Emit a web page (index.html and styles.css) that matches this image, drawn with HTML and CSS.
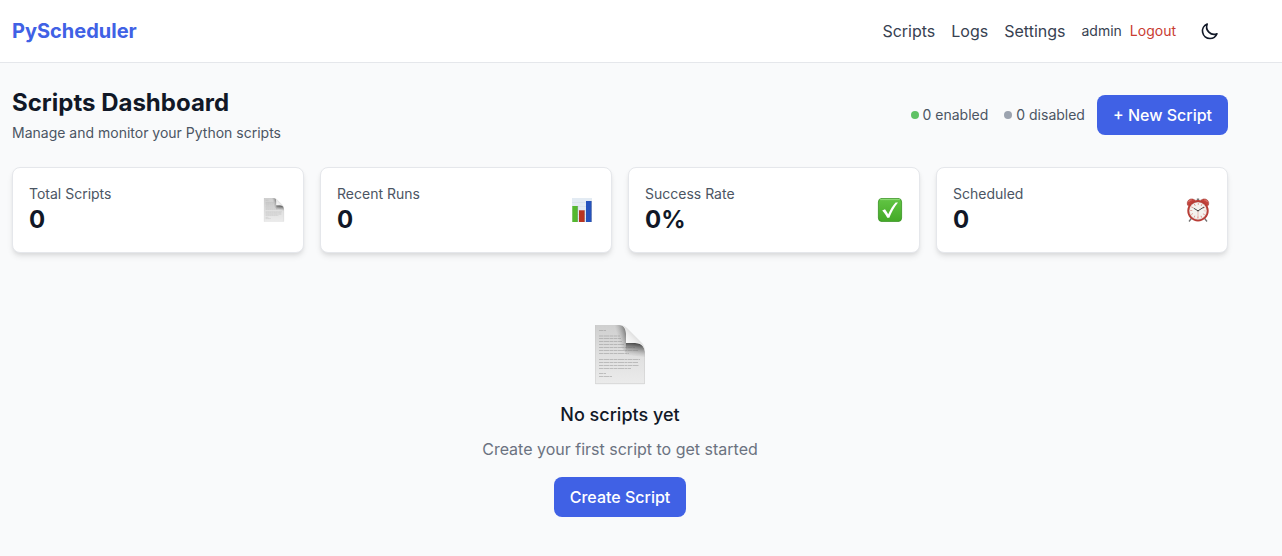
FILE: index.html
```html
<!DOCTYPE html>
<html lang="en">
<head>
<meta charset="utf-8">
<meta name="viewport" content="width=device-width, initial-scale=1">
<title>PyScheduler</title>
<link rel="stylesheet" href="styles.css">
</head>
<body>
<svg class="defs" aria-hidden="true">
  <defs>
    <linearGradient id="paper" x1="0" y1="0" x2="0" y2="1"><stop offset="0" stop-color="#cfcfcf"/><stop offset=".45" stop-color="#dedede"/><stop offset="1" stop-color="#ebebeb"/></linearGradient>
    <linearGradient id="fold-left" gradientUnits="userSpaceOnUse" x1="31" y1="0" x2="20" y2="3"><stop offset="0" stop-color="#444" stop-opacity=".8"/><stop offset="1" stop-color="#999" stop-opacity="0"/></linearGradient>
    <linearGradient id="fold-down" gradientUnits="userSpaceOnUse" x1="40" y1="18" x2="38" y2="32"><stop offset="0" stop-color="#333" stop-opacity=".9"/><stop offset=".4" stop-color="#666" stop-opacity=".6"/><stop offset="1" stop-color="#aaa" stop-opacity="0"/></linearGradient>
    <linearGradient id="flap" gradientUnits="userSpaceOnUse" x1="31" y1="18" x2="40" y2="9"><stop offset="0" stop-color="#fafafa"/><stop offset=".6" stop-color="#ededed"/><stop offset="1" stop-color="#dadada"/></linearGradient>
    <linearGradient id="check-fill" x1="0" y1="0" x2="0" y2="1"><stop offset="0" stop-color="#62c544"/><stop offset="1" stop-color="#43a926"/></linearGradient>
    <symbol id="page" viewBox="0 0 50 60">
      <path fill="url(#paper)" d="M0 0H24C29 0 31 4 31 9V18H40C47 18 50 22 50 29V59H0Z"/>
      <path fill="none" stroke="#939393" stroke-width="1" stroke-dasharray="4 .5 6 .5 3 .5" opacity=".5" d="M4 5.500H11M4 11H25M4 13.500H26M4 16.500H27M4 19.500H29M4 22.500H40M4 25.500H43M4 28.500H34M4 34.500H45M4 37.500H43M4 40.500H44M4 43.500H36M4 48.500H11M4 51.500H17"/>
      <path fill="url(#fold-left)" d="M19 0H24C29 0 31 4 31 9V28L24 20Z"/>
      <path fill="url(#fold-down)" d="M31 18H40C47 18 50 22 50 29V32L31 30Z"/>
      <path fill="url(#flap)" d="M24 0C28 0 30 1 32 3L47 18C49 20 50 23 50 27C49 21 46 18 40 18H31V9C31 4 29 0 24 0Z"/>
      <path fill="none" stroke="#c4c4c4" stroke-width=".5" d="M.3 0V58.700H49.700V29"/>
    </symbol>
  </defs>
</svg>

<header class="topbar">
  <div class="container topbar-inner">
    <a class="brand" href="#">PyScheduler</a>
    <nav class="nav" aria-label="Main">
      <a href="#">Scripts</a>
      <a href="#">Logs</a>
      <a href="#">Settings</a>
      <div class="user">
        <span>admin</span>
        <a class="logout" href="#">Logout</a>
      </div>
      <button class="theme-toggle" type="button" aria-label="Toggle dark mode">
        <svg width="20" height="20" viewBox="0 0 24 24" fill="none" stroke="currentColor" stroke-width="2" stroke-linecap="round" stroke-linejoin="round"><path d="M20.354 15.354A9 9 0 018.646 3.646 9.003 9.003 0 0012 21a9.003 9.003 0 008.354-5.646z"/></svg>
      </button>
    </nav>
  </div>
</header>

<main class="container main">
  <div class="page-head">
    <div>
      <h1>Scripts Dashboard</h1>
      <p class="subtitle">Manage and monitor your Python scripts</p>
    </div>
    <div class="actions">
      <div class="counts">
        <span class="count"><i class="dot dot-on"></i>0 enabled</span>
        <span class="count"><i class="dot dot-off"></i>0 disabled</span>
      </div>
      <button class="btn" type="button">+ New Script</button>
    </div>
  </div>

  <section class="stats" aria-label="Statistics">
    <article class="card">
      <div><p class="label">Total Scripts</p><p class="value">0</p></div>
      <svg class="stat-icon" viewBox="0 0 26 24" aria-hidden="true"><use href="#page" x="2" y="0" width="22" height="24"/></svg>
    </article>
    <article class="card">
      <div><p class="label">Recent Runs</p><p class="value">0</p></div>
      <svg class="stat-icon" viewBox="0 0 26 24" aria-hidden="true">
        <rect x="3" width="20" height="24" fill="#e3ebf3"/>
        <path d="M3 4.500H23M3 8.500H23M3 12.500H23M3 16.500H23M3 20.500H23" stroke="#d3dde8" stroke-width=".6"/>
        <rect x="3.300" y="8" width="5.400" height="16" fill="#54b82f"/>
        <rect x="10" y="12.300" width="5.600" height="11.700" fill="#b93420"/>
        <rect x="17" y="3" width="5.500" height="21" fill="#2553bd"/>
        <path d="M8.700 8V24M15.600 12.300V24M22.500 3V24" stroke="#334" stroke-opacity=".3" stroke-width=".6"/>
      </svg>
    </article>
    <article class="card">
      <div><p class="label">Success Rate</p><p class="value">0%</p></div>
      <svg class="stat-icon" viewBox="0 0 26 24" aria-hidden="true">
        <rect x="1.400" y=".4" width="23.200" height="23.200" rx="3.600" fill="url(#check-fill)" stroke="#36901f" stroke-width=".8"/>
        <path d="M3.500 1.600H22.500" stroke="#9be283" stroke-width=".8" stroke-linecap="round"/>
        <path fill="#fff" d="M5.200 12.600L8 11.200C9.300 12.700 10.300 14.400 11.200 16.200C13.200 11.700 15.800 7.700 18.600 4.500H21C17.300 9.200 14.500 14.200 12.300 19.800H10.200C8.900 17.200 7.300 14.800 5.200 12.600Z"/>
      </svg>
    </article>
    <article class="card">
      <div><p class="label">Scheduled</p><p class="value">0</p></div>
      <svg class="stat-icon" viewBox="0 0 26 24" aria-hidden="true">
        <path d="M6.300 20.500L4 23.500M19.700 20.500L22 23.500" stroke="#737373" stroke-width="1.300"/>
        <path d="M13 .5V3" stroke="#777" stroke-width="2.400"/>
        <path fill="#c5443d" stroke="#963029" stroke-width=".5" d="M2.600 7.200C1.300 3.200 4.200.4 7.700 1L10.300 2.200L3.900 7.800ZM23.400 7.200C24.700 3.200 21.800.4 18.300 1L15.700 2.200L22.100 7.800Z"/>
        <path d="M3.600 4C4.200 2.500 5.400 1.900 6.700 1.900M19.300 1.900C20.600 1.900 21.800 2.500 22.400 4" fill="none" stroke="#e68a83" stroke-width=".8"/>
        <circle cx="13" cy="12.800" r="9.800" fill="#f4f3ef" stroke="#b93d36" stroke-width="1.800"/>
        <circle cx="13" cy="12.800" r="8.700" fill="none" stroke="#8c3732" stroke-opacity=".5" stroke-width=".4"/>
        <circle cx="13" cy="12.800" r="6.700" fill="none" stroke="#d4574e" stroke-opacity=".75" stroke-width="2" stroke-dasharray=".7 2.808" stroke-dashoffset=".35"/>
        <path d="M8.700 10.200L13 12.800L19 9" fill="none" stroke="#333" stroke-width=".9"/>
        <path d="M13 12.800V20" stroke="#df8074" stroke-width=".5"/>
        <circle cx="13" cy="12.800" r=".8" fill="#444"/>
      </svg>
    </article>
  </section>

  <section class="empty">
    <svg class="empty-icon" viewBox="0 0 50 60" aria-hidden="true"><use href="#page" width="50" height="60"/></svg>
    <h2>No scripts yet</h2>
    <p>Create your first script to get started</p>
    <button class="btn" type="button">Create Script</button>
  </section>
</main>
</body>
</html>
```

FILE: styles.css
```css
*, *::before, *::after { box-sizing: border-box; }
body, h1, h2, p { margin: 0; }
body {
  min-height: 100vh;
  background: #f9fafb;
  color: #111827;
  font: 400 16px/24px Inter, "Liberation Sans", sans-serif;
}
a { color: inherit; text-decoration: none; }
button { font: inherit; border: 0; cursor: pointer; }
svg { display: block; }
.defs { position: absolute; width: 0; height: 0; }

.container { padding-left: 12px; padding-right: 54px; }

.topbar { background: #fff; border-bottom: 1px solid #e5e7eb; }
.topbar-inner {
  display: flex;
  align-items: center;
  justify-content: space-between;
  padding-top: 12px;
  padding-bottom: 12px;
}
.brand { color: #4061e5; font-size: 20px; line-height: 28px; font-weight: 700; }
.nav { display: flex; align-items: center; gap: 16px; color: #374151; }
.user { display: flex; gap: 8px; font-size: 14px; line-height: 20px; }
.logout { color: #c93c31; }
.theme-toggle { padding: 9px 8px; background: none; color: #111827; border-radius: 8px; }

.main { padding-top: 24px; padding-bottom: 24px; }
.page-head {
  display: flex;
  align-items: center;
  justify-content: space-between;
  margin-bottom: 24px;
}
h1 { font-size: 24px; line-height: 32px; font-weight: 700; margin-bottom: 4px; }
.subtitle, .label { color: #4b5563; font-size: 14px; line-height: 20px; }
.actions { display: flex; align-items: center; gap: 12px; }
.counts { display: flex; gap: 16px; color: #4b5563; font-size: 14px; line-height: 20px; }
.count { display: flex; align-items: center; gap: 4px; }
.dot { width: 8px; height: 8px; border-radius: 50%; }
.dot-on { background: #5fc264; }
.dot-off { background: #9ca3af; }
.btn {
  padding: 8px 16px;
  border-radius: 8px;
  background: #4061e5;
  color: #fff;
  font-weight: 500;
}

.stats { display: grid; grid-template-columns: repeat(4, 1fr); gap: 16px; margin-bottom: 24px; }
.card {
  display: flex;
  align-items: center;
  justify-content: space-between;
  padding: 16px;
  background: #fff;
  border: 1px solid #e5e7eb;
  border-radius: 8px;
  box-shadow: 0 4px 6px -1px rgba(0, 0, 0, .1), 0 2px 4px -1px rgba(0, 0, 0, .06);
}
.value { font-size: 24px; line-height: 32px; font-weight: 700; }
.stat-icon { width: 26px; height: 24px; }

.empty {
  display: flex;
  flex-direction: column;
  align-items: center;
  padding-top: 48px;
  text-align: center;
}
.empty-icon { width: 50px; height: 60px; margin-bottom: 16px; }
.empty h2 { font-size: 18px; line-height: 28px; font-weight: 500; margin-bottom: 8px; }
.empty p { color: #6b7280; margin-bottom: 16px; }
```
